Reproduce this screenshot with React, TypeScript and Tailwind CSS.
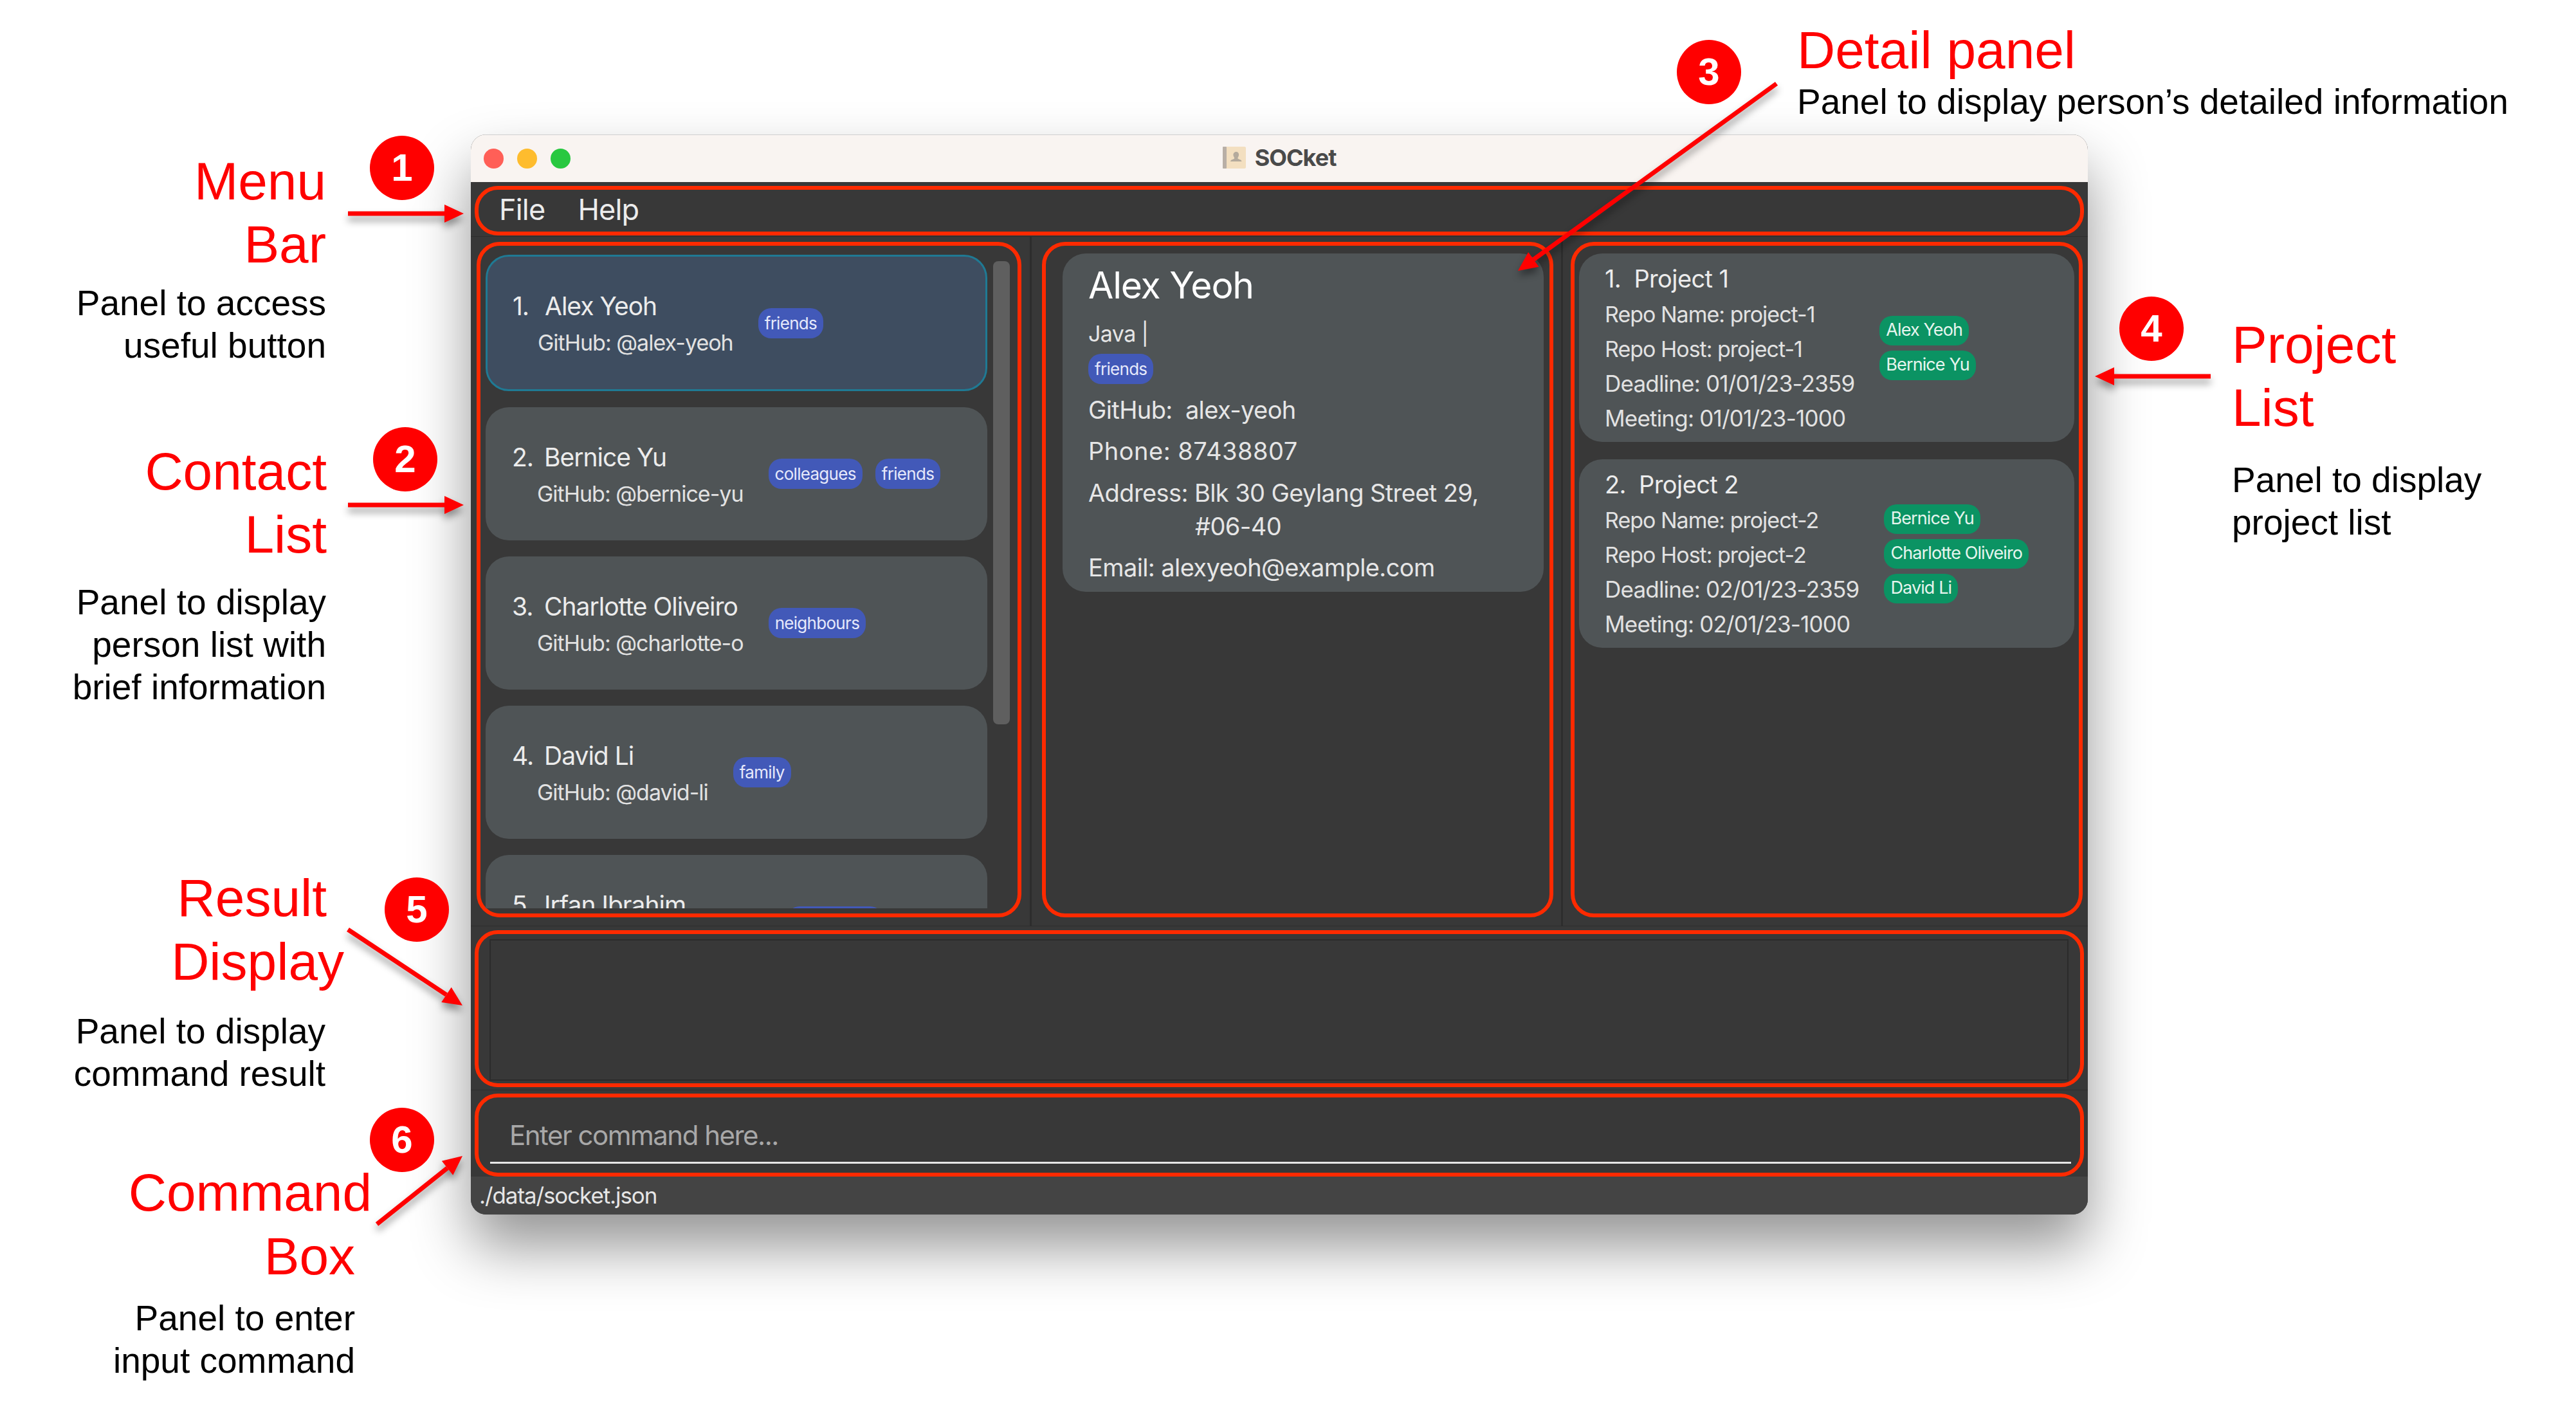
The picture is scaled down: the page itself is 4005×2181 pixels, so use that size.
import React from 'react';

type Person = { index: string; name: string; github: string; tags: string[] };

const people: Person[] = [
  { index: '1.', name: 'Alex Yeoh', github: '@alex-yeoh', tags: ['friends'] },
  { index: '2.', name: 'Bernice Yu', github: '@bernice-yu', tags: ['colleagues', 'friends'] },
  { index: '3.', name: 'Charlotte Oliveiro', github: '@charlotte-o', tags: ['neighbours'] },
  { index: '4.', name: 'David Li', github: '@david-li', tags: ['family'] },
  { index: '5.', name: 'Irfan Ibrahim', github: '@irfan-ibrahim', tags: ['classmates'] },
];

const projects = [
  {
    title: '1.  Project 1',
    lines: ['Repo Name: project-1', 'Repo Host: project-1', 'Deadline: 01/01/23-2359', 'Meeting: 01/01/23-1000'],
    members: ['Alex Yeoh', 'Bernice Yu'],
  },
  {
    title: '2.  Project 2',
    lines: ['Repo Name: project-2', 'Repo Host: project-2', 'Deadline: 02/01/23-2359', 'Meeting: 02/01/23-1000'],
    members: ['Bernice Yu', 'Charlotte Oliveiro', 'David Li'],
  },
];

const redBox = 'rounded-[36px] border-[6px] border-[#ff2a00]';

const Tag = ({ label }: { label: string }) => (
  <span className="flex h-[47px] items-center rounded-[20px] bg-[#4259b8] px-[10px] text-[26px] tracking-[-0.7px] whitespace-nowrap text-[#e6e9fb]">
    {label}
  </span>
);

const Member = ({ label }: { label: string }) => (
  <span className="flex h-[46px] items-center self-start rounded-[20px] bg-[#0b9363] px-[10px] text-[27px] tracking-[-0.9px] whitespace-nowrap text-[#e6f5ee]">
    {label}
  </span>
);

const PersonCard = ({ person, selected }: { person: Person; selected: boolean }) => (
  <div
    className={
      selected
        ? 'flex h-[212px] shrink-0 items-center gap-[39px] rounded-[36px] border-[3px] border-[#1f7a94] bg-[#3e4d60] pl-[39px]'
        : 'flex h-[207px] shrink-0 items-center gap-[39px] rounded-[36px] bg-[#4f5456] pl-[41px]'
    }
  >
    <div className="mt-[5px] flex flex-col">
      <div className="flex h-[56px] items-center text-[39px] tracking-[-1px] whitespace-pre text-[#ececec]">
        <span className="w-[50px]">{person.index}</span>
        <span>{person.name}</span>
      </div>
      <div className="flex h-[56px] items-center pl-[39px] text-[34px] tracking-[-1px] whitespace-nowrap text-[#e2e2e2]">
        GitHub: {person.github}
      </div>
    </div>
    <div className="flex gap-[20px]">
      {person.tags.map((tag) => (
        <Tag key={tag} label={tag} />
      ))}
    </div>
  </div>
);

const Arrow = ({ x1, y1, x2, y2 }: { x1: number; y1: number; x2: number; y2: number }) => {
  const len = Math.hypot(x2 - x1, y2 - y1);
  const ux = (x2 - x1) / len;
  const uy = (y2 - y1) / len;
  const bx = x2 - ux * 30;
  const by = y2 - uy * 30;
  const head = `${x2},${y2} ${bx - uy * 14},${by + ux * 14} ${bx + uy * 14},${by - ux * 14}`;
  return (
    <g>
      <line x1={x1} y1={y1} x2={bx} y2={by} stroke="#ff0000" strokeWidth="7" />
      <polygon points={head} fill="#ff0000" />
    </g>
  );
};

const Badge = ({ className, n }: { className: string; n: string }) => (
  <div
    className={`absolute flex h-[100px] w-[100px] items-center justify-center rounded-full bg-[#ff0000] text-[60px] font-bold text-white ${className}`}
  >
    {n}
  </div>
);

const Title = ({ className, children }: { className: string; children: React.ReactNode }) => (
  <div className={`absolute text-[82px] leading-[98px] whitespace-pre text-[#ff0000] ${className}`}>{children}</div>
);

const Note = ({ className, children }: { className: string; children: React.ReactNode }) => (
  <div className={`absolute text-[55px] leading-[66px] whitespace-pre text-black ${className}`}>{children}</div>
);

const Annotations = () => (
  <div className="font-['Liberation_Sans',Arial,sans-serif]">
    <Title className="top-[233px] right-[3498px] text-right">{'Menu\nBar'}</Title>
    <Note className="top-[438px] right-[3498px] text-right">{'Panel to access\nuseful button'}</Note>
    <Badge className="top-[211px] left-[575px]" n="1" />

    <Title className="top-[684px] right-[3497px] text-right">{'Contact\nList'}</Title>
    <Note className="top-[903px] right-[3498px] text-right">{'Panel to display\nperson list with\nbrief information'}</Note>
    <Badge className="top-[664px] left-[580px]" n="2" />

    <Title className="top-[1347px] right-[3497px]">Result</Title>
    <Title className="top-[1446px] right-[3470px]">Display</Title>
    <Note className="top-[1570px] right-[3499px] text-right">{'Panel to display\ncommand result'}</Note>
    <Badge className="top-[1364px] left-[598px]" n="5" />

    <Title className="top-[1805px] right-[3427px]">Command</Title>
    <Title className="top-[1904px] right-[3453px]">Box</Title>
    <Note className="top-[2016px] right-[3453px] text-right">{'Panel to enter\ninput command'}</Note>
    <Badge className="top-[1722px] left-[575px]" n="6" />

    <Title className="top-[29px] left-[2794px]">Detail panel</Title>
    <Note className="top-[125px] left-[2794px]">Panel to display person’s detailed information</Note>
    <Badge className="top-[62px] left-[2607px]" n="3" />

    <Title className="top-[487px] left-[3470px]">{'Project\nList'}</Title>
    <Note className="top-[713px] left-[3470px]">{'Panel to display\nproject list'}</Note>
    <Badge className="top-[461px] left-[3295px]" n="4" />

    <svg
      className="pointer-events-none absolute inset-0 drop-shadow-[0_8px_6px_rgba(0,0,0,0.4)]"
      width="4005"
      height="2181"
      viewBox="0 0 4005 2181"
    >
      <Arrow x1={541} y1={332} x2={721} y2={332} />
      <Arrow x1={541} y1={785} x2={721} y2={785} />
      <Arrow x1={2762} y1={130} x2={2360} y2={421} />
      <Arrow x1={3437} y1={585} x2={3257} y2={585} />
      <Arrow x1={541} y1={1445} x2={719} y2={1563} />
      <Arrow x1={586} y1={1903} x2={719} y2={1797} />
    </svg>
  </div>
);

export default function App() {
  return (
    <div className="relative h-[2181px] w-[4005px] overflow-hidden bg-white">
      <div className="absolute top-[209px] left-[732px] flex h-[1679px] w-[2514px] flex-col overflow-hidden rounded-[24px] bg-[#383838] font-['Inter',sans-serif] shadow-[0_50px_90px_rgba(0,0,0,0.42)]">
        {/* title bar */}
        <div className="relative flex h-[74px] shrink-0 items-center justify-center border-t border-[#d0d0d0] bg-[#f9f4f1]">
          <div className="absolute top-[21px] left-[20px] flex gap-[21px]">
            <div className="h-[31px] w-[31px] rounded-full bg-[#ff5f57]" />
            <div className="h-[31px] w-[31px] rounded-full bg-[#febc2e]" />
            <div className="h-[31px] w-[31px] rounded-full bg-[#28c840]" />
          </div>
          <div className="mb-[3px] flex items-center gap-[14px]">
            <svg width="36" height="34" viewBox="0 0 36 34">
              <rect x="0" y="0" width="36" height="34" rx="2" fill="#f3dfc0" />
              <rect x="0" y="0" width="6" height="34" rx="1" fill="#b9afa6" />
              <path d="M21 8c3 0 4.500 2.500 4 5.500-.3 1.500-1 2.600-1.500 3.400v1.800c2 1 6 1.800 6 4.300H12c0-2.500 4-3.300 6-4.300v-1.800c-.5-.8-1.200-1.900-1.500-3.400C16 10.500 18 8 21 8z" fill="#b4aa9c" />
            </svg>
            <span className="text-[36px] font-bold tracking-[-1px] text-[#4a4a4a]">SOCket</span>
          </div>
        </div>

        {/* menu bar */}
        <div className="h-[85px] shrink-0 border-b border-[#2d2d2d] px-[6px] pt-[6px] pb-px">
          <div className={`flex h-full items-center gap-[51px] pb-[3px] pl-[32px] text-[45px] tracking-[-0.8px] text-[#ececec] ${redBox}`}>
            <span>File</span>
            <span>Help</span>
          </div>
        </div>

        <div className="flex h-[1072px] shrink-0 border-b border-[#2d2d2d]">
          {/* contact list */}
          <div className="h-full w-[872px] shrink-0 border-r-[3px] border-[#2d2d2d] pt-[8px] pr-[13px] pb-[13px] pl-[9px]">
            <div className={`flex h-full gap-[9px] pt-[14px] pb-[8px] pl-[8px] ${redBox}`}>
              <div className="flex h-full w-[780px] shrink-0 flex-col gap-[25px] overflow-hidden">
                {people.map((person, i) => (
                  <PersonCard key={person.name} person={person} selected={i === 0} />
                ))}
              </div>
              <div className="mt-[10px] h-[720px] w-[26px] rounded-[8px] bg-[#5f5f5f]" />
            </div>
          </div>

          {/* detail panel */}
          <div className="h-full w-[826px] shrink-0 border-r-[3px] border-[#2d2d2d] pt-[8px] pr-[12px] pb-[13px] pl-[16px]">
            <div className={`h-full pt-[12px] pr-[9px] pl-[26px] ${redBox}`}>
              <div className="flex h-[526px] flex-col rounded-[36px] bg-[#4f5456] pt-[20px] pl-[40px] text-[38px] tracking-[-0.6px] text-[#e6e6e6]">
                <div className="flex h-[60px] items-center text-[57px] tracking-[-1.2px] text-white">Alex Yeoh</div>
                <div className="mt-[24px] flex h-[40px] items-center text-[34px]">Java |</div>
                <div className="mt-[12px] flex">
                  <Tag label="friends" />
                </div>
                <div className="mt-[18px] flex h-[44px] items-center whitespace-pre">GitHub:  alex-yeoh</div>
                <div className="mt-[20px] flex h-[44px] items-center tracking-[0.5px]">Phone: 87438807</div>
                <div className="mt-[21px] flex h-[44px] items-center">Address: Blk 30 Geylang Street 29,</div>
                <div className="mt-[8px] flex h-[44px] items-center pl-[166px]">#06-40</div>
                <div className="mt-[20px] flex h-[44px] items-center">Email: alexyeoh@example.com</div>
              </div>
            </div>
          </div>

          {/* project list */}
          <div className="h-full min-w-0 flex-1 pt-[8px] pr-[8px] pb-[13px] pl-[12px]">
            <div className={`flex h-full flex-col gap-[27px] px-[7px] pt-[12px] ${redBox}`}>
              {projects.map((project) => (
                <div key={project.title} className="flex h-[293px] items-center gap-[39px] rounded-[36px] bg-[#4f5456] pl-[40px]">
                  <div className="flex flex-col">
                    <div className="mt-[2px] flex h-[56px] items-center text-[38px] tracking-[-0.6px] whitespace-pre text-[#ececec]">
                      {project.title}
                    </div>
                    {project.lines.map((line) => (
                      <div
                        key={line}
                        className={
                          line.startsWith('Repo')
                            ? 'flex h-[54px] items-center text-[34px] tracking-[-1px] whitespace-nowrap text-[#e2e2e2]'
                            : 'flex h-[54px] items-center text-[35px] tracking-[-0.8px] whitespace-nowrap text-[#e2e2e2]'
                        }
                      >
                        {line}
                      </div>
                    ))}
                  </div>
                  <div className="flex flex-col gap-[8px]">
                    {project.members.map((member) => (
                      <Member key={member} label={member} />
                    ))}
                  </div>
                </div>
              ))}
            </div>
          </div>
        </div>

        {/* result display */}
        <div className="h-[255px] shrink-0 border-b border-[#2d2d2d] px-[6px] pt-[6px] pb-[4px]">
          <div className={`h-full pt-[8px] pr-[18px] pb-[4px] pl-[17px] ${redBox}`}>
            <div className="h-full border-2 border-[#2b2b2b]" />
          </div>
        </div>

        {/* command box */}
        <div className="relative z-10 h-[134px] shrink-0 px-[6px] pt-[5px]">
          <div className={`h-full pt-[20px] pr-[14px] pl-[18px] ${redBox}`}>
            <div className="flex h-[83px] items-center border-b-[3px] border-[#e6e6e6] pb-[4px] pl-[30px] text-[42px] tracking-[-1.5px] text-[#a8a8a8]">
              Enter command here...
            </div>
          </div>
        </div>

        {/* status bar */}
        <div className="flex h-[59px] shrink-0 items-center bg-[#444444] pl-[13px] text-[35px] tracking-[-1.1px] text-[#e6e6e6]">
          ./data/socket.json
        </div>
      </div>

      <Annotations />
    </div>
  );
}
